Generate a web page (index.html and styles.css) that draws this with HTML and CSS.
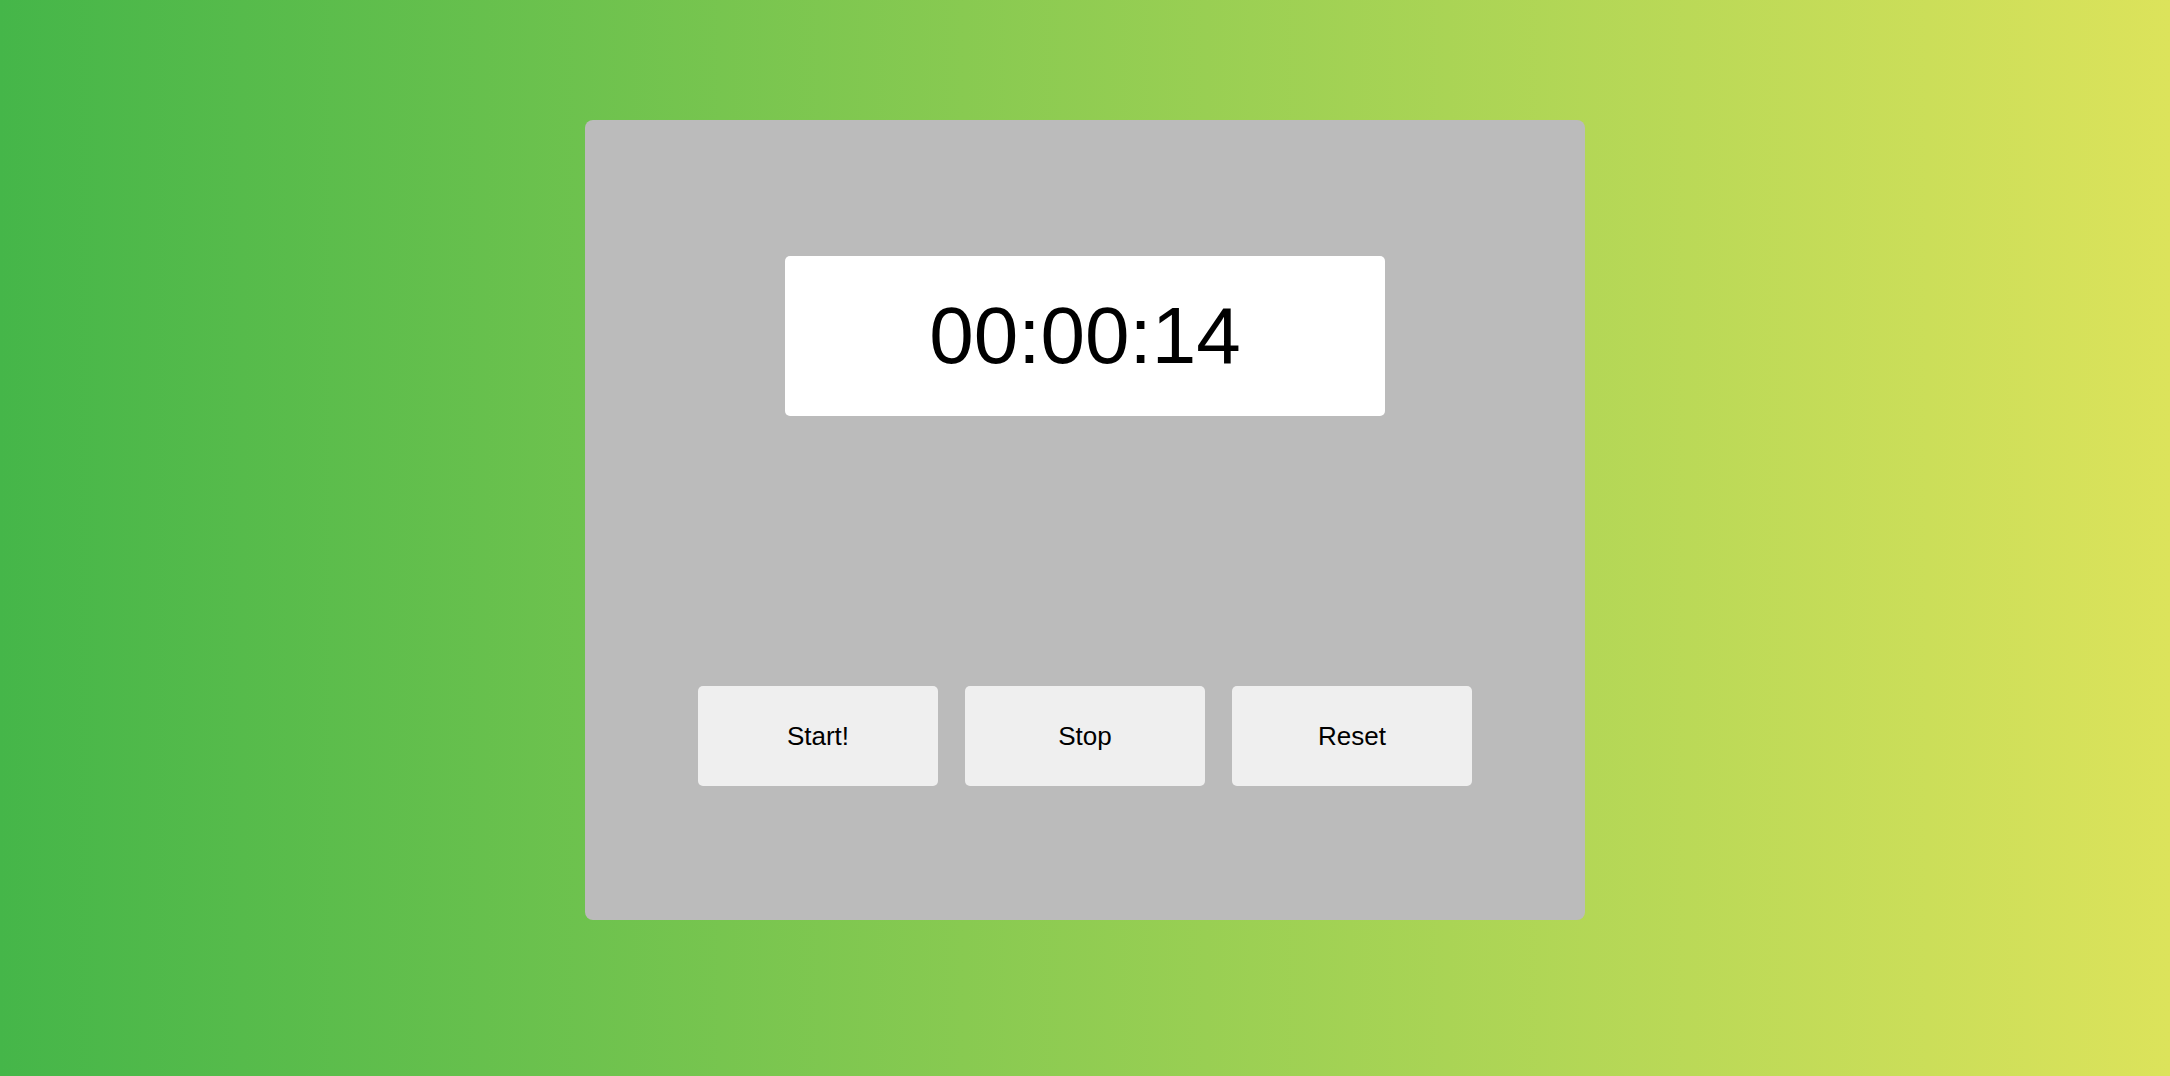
FILE: index.html
```html
<!DOCTYPE html>
<html>
<head>
<meta charset="utf-8">
<link rel="stylesheet" href="styles.css">
</head>
<body>
<div class="card">
  <div class="display">00:00:14</div>
  <div class="controls">
    <button class="btn">Start!</button>
    <button class="btn">Stop</button>
    <button class="btn">Reset</button>
  </div>
</div>
</body>
</html>
```
FILE: styles.css
```css
html, body {
  margin: 0;
  padding: 0;
  height: 100%;
}
body {
  background: linear-gradient(to right, #45b649, #dce35b);
  font-family: "Liberation Sans", Arial, sans-serif;
  overflow: hidden;
}
.card {
  box-sizing: border-box;
  width: 1000px;
  height: 800px;
  margin: 120px auto 0;
  background: #bbbbbb;
  border-radius: 8px;
  padding-top: 136px;
  display: flex;
  flex-direction: column;
  align-items: center;
}
.display {
  width: 600px;
  height: 160px;
  background: #ffffff;
  border-radius: 5px;
  display: flex;
  align-items: center;
  justify-content: center;
  font-size: 80px;
  color: #000;
}
.controls {
  margin-top: 270px;
  display: flex;
  gap: 27px;
}
.btn {
  width: 240px;
  height: 100px;
  border: none;
  border-radius: 5px;
  background: #efefef;
  font-family: "Liberation Sans", Arial, sans-serif;
  font-size: 26px;
  color: #000;
  padding: 0;
}
```
